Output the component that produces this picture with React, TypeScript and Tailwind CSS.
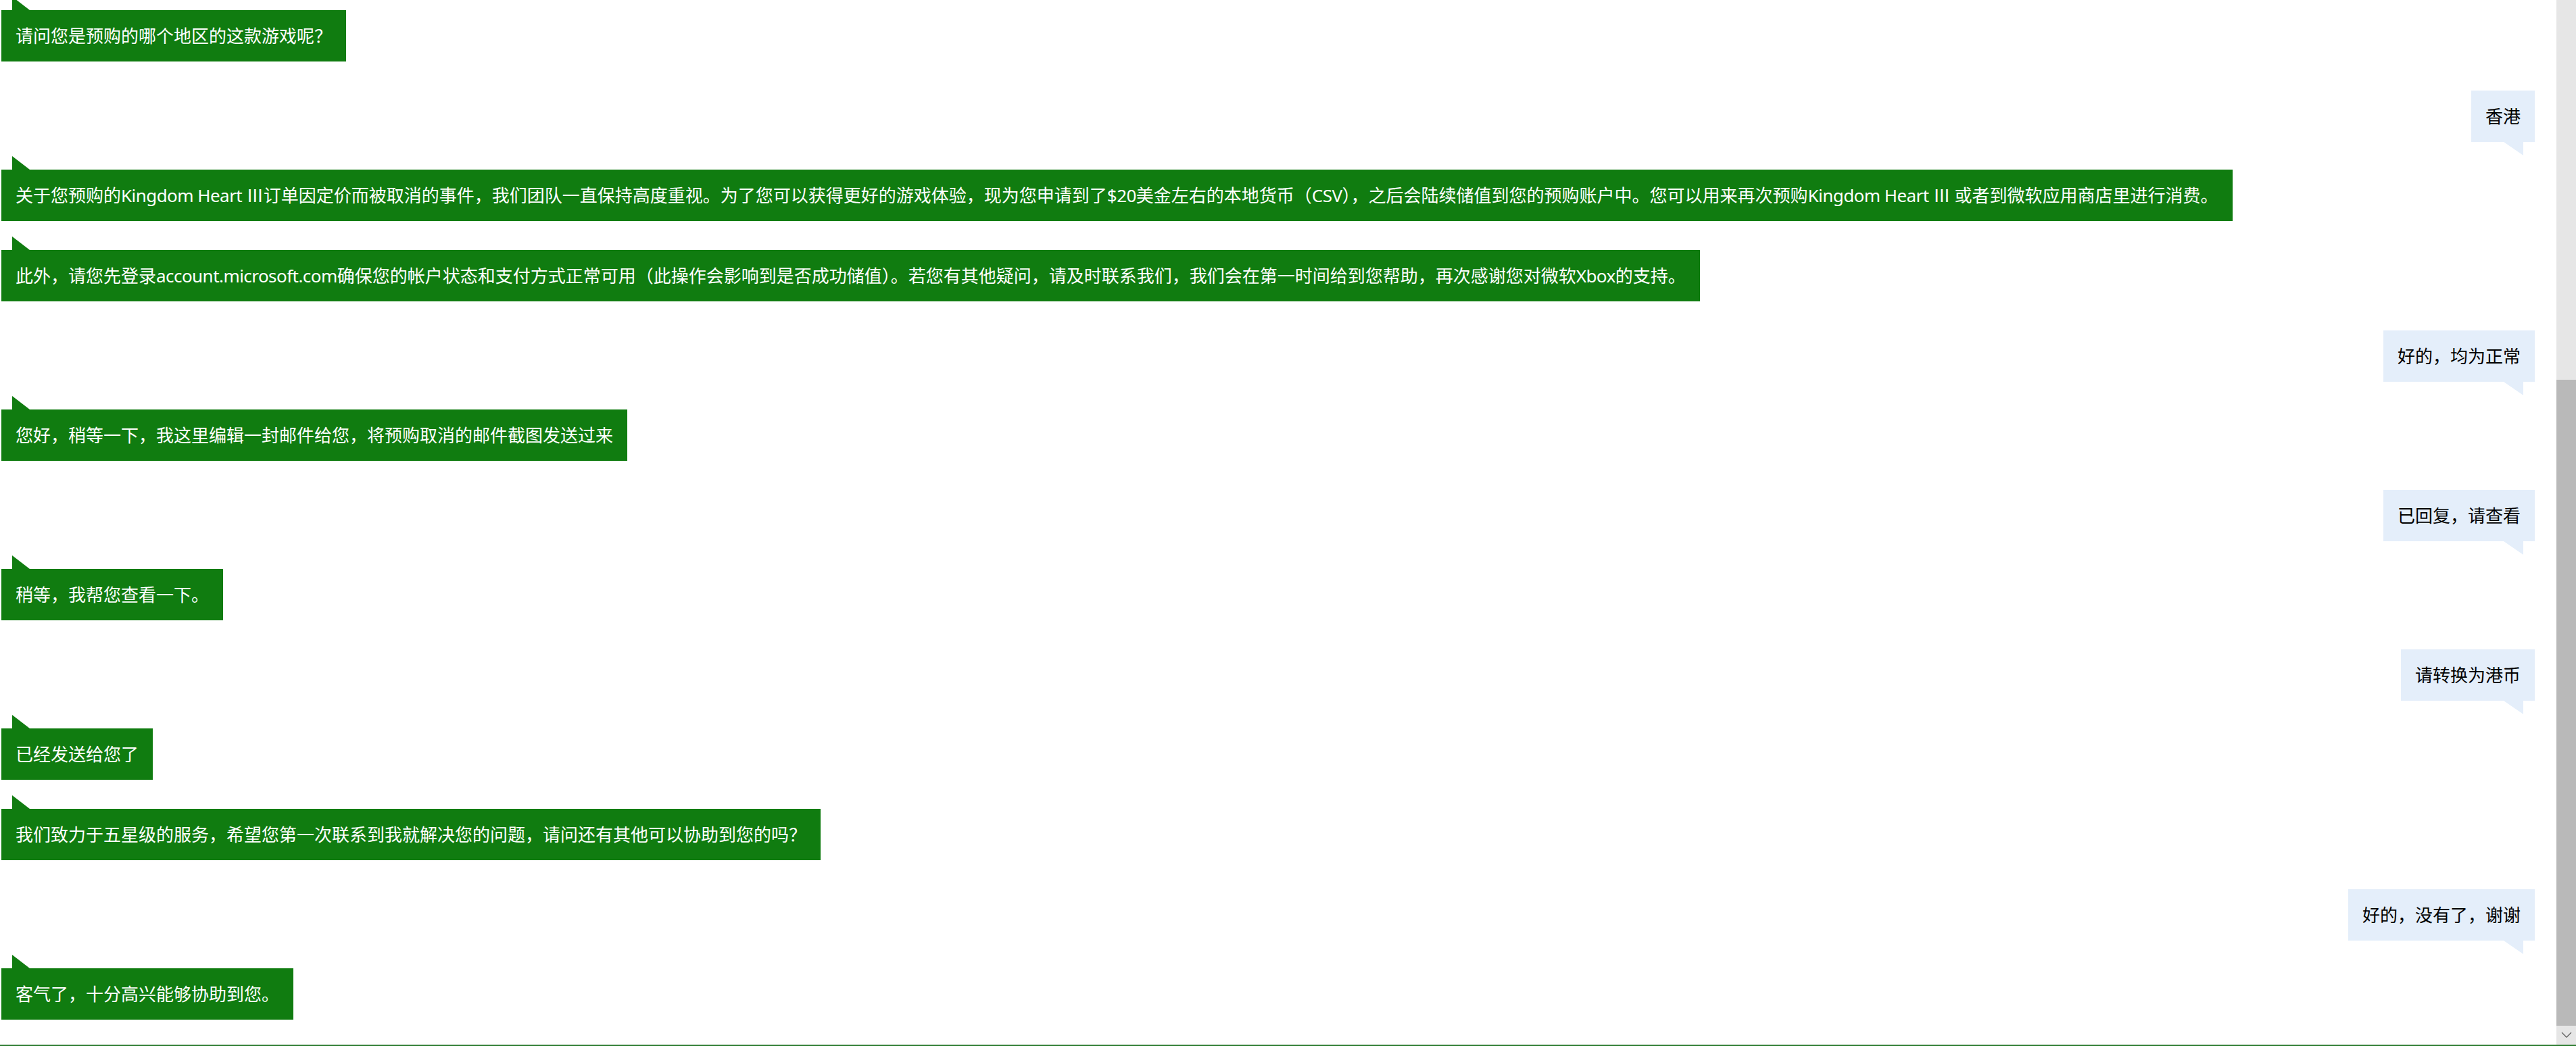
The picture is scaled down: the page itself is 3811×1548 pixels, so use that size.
import React from "react";

type Msg = { from: "agent" | "user"; text: string };

const messages: Msg[] = [
  { from: "agent", text: "请问您是预购的哪个地区的这款游戏呢？" },
  { from: "user", text: "香港" },
  {
    from: "agent",
    text: "关于您预购的Kingdom Heart Ⅲ订单因定价而被取消的事件，我们团队一直保持高度重视。为了您可以获得更好的游戏体验，现为您申请到了$20美金左右的本地货币（CSV），之后会陆续储值到您的预购账户中。您可以用来再次预购Kingdom Heart Ⅲ 或者到微软应用商店里进行消费。",
  },
  {
    from: "agent",
    text: "此外，请您先登录account.microsoft.com确保您的帐户状态和支付方式正常可用（此操作会影响到是否成功储值）。若您有其他疑问，请及时联系我们，我们会在第一时间给到您帮助，再次感谢您对微软Xbox的支持。",
  },
  { from: "user", text: "好的，均为正常" },
  { from: "agent", text: "您好，稍等一下，我这里编辑一封邮件给您，将预购取消的邮件截图发送过来" },
  { from: "user", text: "已回复，请查看" },
  { from: "agent", text: "稍等，我帮您查看一下。" },
  { from: "user", text: "请转换为港币" },
  { from: "agent", text: "已经发送给您了" },
  { from: "agent", text: "我们致力于五星级的服务，希望您第一次联系到我就解决您的问题，请问还有其他可以协助到您的吗？" },
  { from: "user", text: "好的，没有了，谢谢" },
  { from: "agent", text: "客气了，十分高兴能够协助到您。" },
];

function RichText({ text }: { text: string }) {
  const parts = text.split(/([A-Za-z0-9$.Ⅲ ]+)/);
  return (
    <>
      {parts.map((p, i) =>
        i % 2 === 1 ? (
          <span key={i} className="tracking-[-0.55px]">
            {p}
          </span>
        ) : (
          <React.Fragment key={i}>{p}</React.Fragment>
        )
      )}
    </>
  );
}

function AgentRow({ text }: { text: string }) {
  return (
    <div className="flex flex-col items-start pb-[23px]">
      <svg className="ml-[18px] block" width="26" height="20" viewBox="0 0 26 20">
        <polygon points="0,0 0,20 26,20" fill="#107c10" />
      </svg>
      <div className="ml-[2px] h-[76px] whitespace-nowrap bg-[#107c10] px-[21px] text-[26px] leading-[76px] text-white">
        <RichText text={text} />
      </div>
    </div>
  );
}

function UserRow({ text }: { text: string }) {
  return (
    <div className="flex flex-col items-end pt-[20px] pb-[1px]">
      <div className="h-[76px] whitespace-nowrap bg-[#e4eefa] px-[21px] text-[26px] leading-[76px] text-black">
        {text}
      </div>
      <svg className="mr-[17px] block" width="29" height="20" viewBox="0 0 29 20">
        <polygon points="0,0 29,0 29,20" fill="#e4eefa" />
      </svg>
    </div>
  );
}

export default function App() {
  return (
    <div
      className="flex h-[1548px] w-full flex-col overflow-hidden bg-white"
      style={{ fontFamily: '"Noto Sans", "Noto Sans CJK SC", sans-serif' }}
    >
      <div className="flex h-[1546px] w-full">
        <div className="h-full flex-1 overflow-hidden pr-[32px]">
          <div className="-mt-[5px] flex flex-col">
            {messages.map((m, i) =>
              m.from === "agent" ? <AgentRow key={i} text={m.text} /> : <UserRow key={i} text={m.text} />
            )}
          </div>
        </div>
        <div className="flex h-full w-[29px] flex-col bg-[#e6e6e6]">
          <div className="h-[562px]" />
          <div className="flex-1 bg-[#b9b9b9]" />
          <div className="flex h-[28px] items-center justify-center">
            <svg width="16" height="10" viewBox="0 0 16 10">
              <polyline points="1,1 8,8 15,1" fill="none" stroke="#606060" strokeWidth="1.3" />
            </svg>
          </div>
        </div>
      </div>
      <div className="h-[2px] w-full bg-[#2e7d32]" />
    </div>
  );
}
